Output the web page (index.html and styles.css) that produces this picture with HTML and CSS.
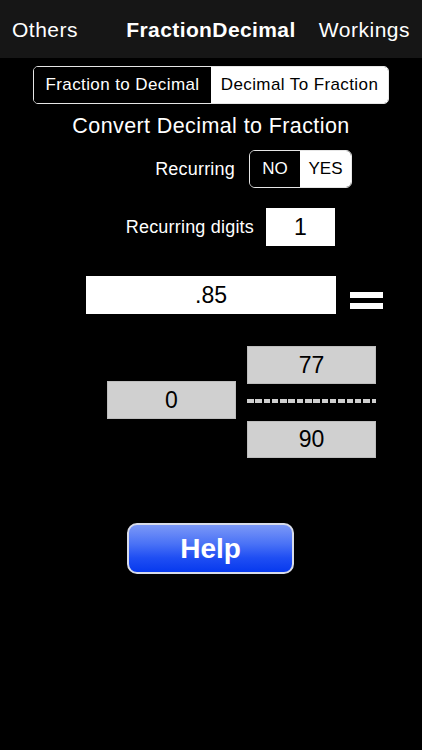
FILE: index.html
```html
<!DOCTYPE html>
<html>
<head>
<meta charset="utf-8">
<link rel="stylesheet" href="styles.css">
</head>
<body>
<div class="screen">
  <nav class="nav">
    <span class="nav-left">Others</span>
    <span class="nav-title">FractionDecimal</span>
    <span class="nav-right">Workings</span>
  </nav>

  <div class="segment">
    <div class="seg seg-on">Fraction to Decimal</div>
    <div class="seg seg-off">Decimal To Fraction</div>
  </div>

  <h1 class="heading">Convert Decimal to Fraction</h1>

  <div class="row row-recurring">
    <span class="label">Recurring</span>
    <div class="toggle">
      <div class="tog tog-on">NO</div>
      <div class="tog tog-off">YES</div>
    </div>
  </div>

  <div class="row row-digits">
    <span class="label">Recurring digits</span>
    <div class="digit-box">1</div>
  </div>

  <div class="input-row">
    <div class="decimal-input">.85</div>
    <div class="equals"><span></span><span></span></div>
  </div>

  <div class="fraction">
    <div class="whole">0</div>
    <div class="frac-col">
      <div class="frac-box">77</div>
      <div class="dashes"></div>
      <div class="frac-box frac-bottom">90</div>
    </div>
  </div>

  <div class="help-wrap">
    <button class="help">Help</button>
  </div>
</div>
</body>
</html>
```

FILE: styles.css
```css
* { box-sizing: border-box; }
html, body {
  margin: 0;
  padding: 0;
  background: #000;
}
body {
  font-family: "Liberation Sans", Arial, sans-serif;
  color: #fff;
  width: 422px;
  height: 750px;
  overflow: hidden;
}
.screen {
  display: flex;
  flex-direction: column;
}
.nav {
  height: 58px;
  background: #161616;
  display: grid;
  grid-template-columns: 1fr auto 1fr;
  align-items: center;
  padding: 1px 12px 0 12px;
  font-size: 21px;
  letter-spacing: 0.5px;
}
.nav-left { justify-self: start; }
.nav-title { font-weight: bold; letter-spacing: 0.4px; }
.nav-right { justify-self: end; }

.segment {
  margin: 8px auto 0;
  width: 356px;
  height: 38px;
  display: flex;
  border: 1.5px solid #e6e6e6;
  border-radius: 5px;
  overflow: hidden;
  font-size: 17px;
  letter-spacing: 0.4px;
}
.seg {
  display: flex;
  align-items: center;
  justify-content: center;
}
.seg-on { width: 177px; background: #000; color: #fff; }
.seg-off { flex: 1; background: #fff; color: #000; }

.heading {
  margin: 9px 0 0;
  text-align: center;
  font-weight: normal;
  font-size: 21.5px;
  line-height: 26px;
  letter-spacing: 0.4px;
}

.row {
  display: flex;
  justify-content: flex-end;
  align-items: center;
}
.label {
  font-size: 18px;
  letter-spacing: 0.2px;
}
.row-recurring {
  margin-top: 11px;
  padding-right: 70px;
  gap: 14px;
}
.toggle {
  width: 103px;
  height: 38px;
  display: flex;
  border: 1.5px solid #e6e6e6;
  border-radius: 6px;
  overflow: hidden;
  font-size: 17px;
}
.tog {
  display: flex;
  align-items: center;
  justify-content: center;
}
.tog-on { width: 50px; background: #000; color: #fff; }
.tog-off { flex: 1; background: #fff; color: #000; }

.row-digits {
  margin-top: 20px;
  padding-right: 87px;
  gap: 12px;
}
.digit-box {
  width: 69px;
  height: 38px;
  background: #fff;
  color: #000;
  font-size: 23px;
  display: flex;
  align-items: center;
  justify-content: center;
}

.input-row {
  margin-top: 30px;
  padding-left: 86px;
  display: flex;
  align-items: center;
  gap: 14px;
}
.decimal-input {
  width: 250px;
  height: 38px;
  background: #fff;
  color: #000;
  font-size: 23px;
  display: flex;
  align-items: center;
  justify-content: center;
}
.equals {
  display: flex;
  flex-direction: column;
  gap: 5px;
  margin-top: 11px;
}
.equals span {
  display: block;
  width: 33px;
  height: 6px;
  background: #fff;
}

.fraction {
  margin-top: 32px;
  padding-left: 107px;
  display: flex;
  align-items: flex-start;
  gap: 11px;
}
.whole, .frac-box {
  width: 129px;
  height: 38px;
  background: #d0d0d0;
  color: #000;
  font-size: 23px;
  display: flex;
  align-items: center;
  justify-content: center;
  border: 1px solid #bdbdbd;
}
.whole { margin-top: 35px; }
.frac-bottom { height: 37px; }
.frac-col {
  display: flex;
  flex-direction: column;
}
.dashes {
  height: 4px;
  margin: 15px 0 18px;
  background: repeating-linear-gradient(to right, #cfcfcf 0 6.5px, transparent 6.5px 8.3px);
}

.help-wrap {
  margin-top: 65px;
  display: flex;
  padding-left: 127px;
}
.help {
  width: 167px;
  height: 51px;
  border: 2px solid #d8dcea;
  border-radius: 10px;
  background: linear-gradient(to bottom, #7b98f7 0%, #4a72f6 40%, #1f4ef3 70%, #0739ee 100%);
  color: #fff;
  font-family: "Liberation Sans", Arial, sans-serif;
  font-weight: bold;
  font-size: 28px;
  padding: 0;
}
```
